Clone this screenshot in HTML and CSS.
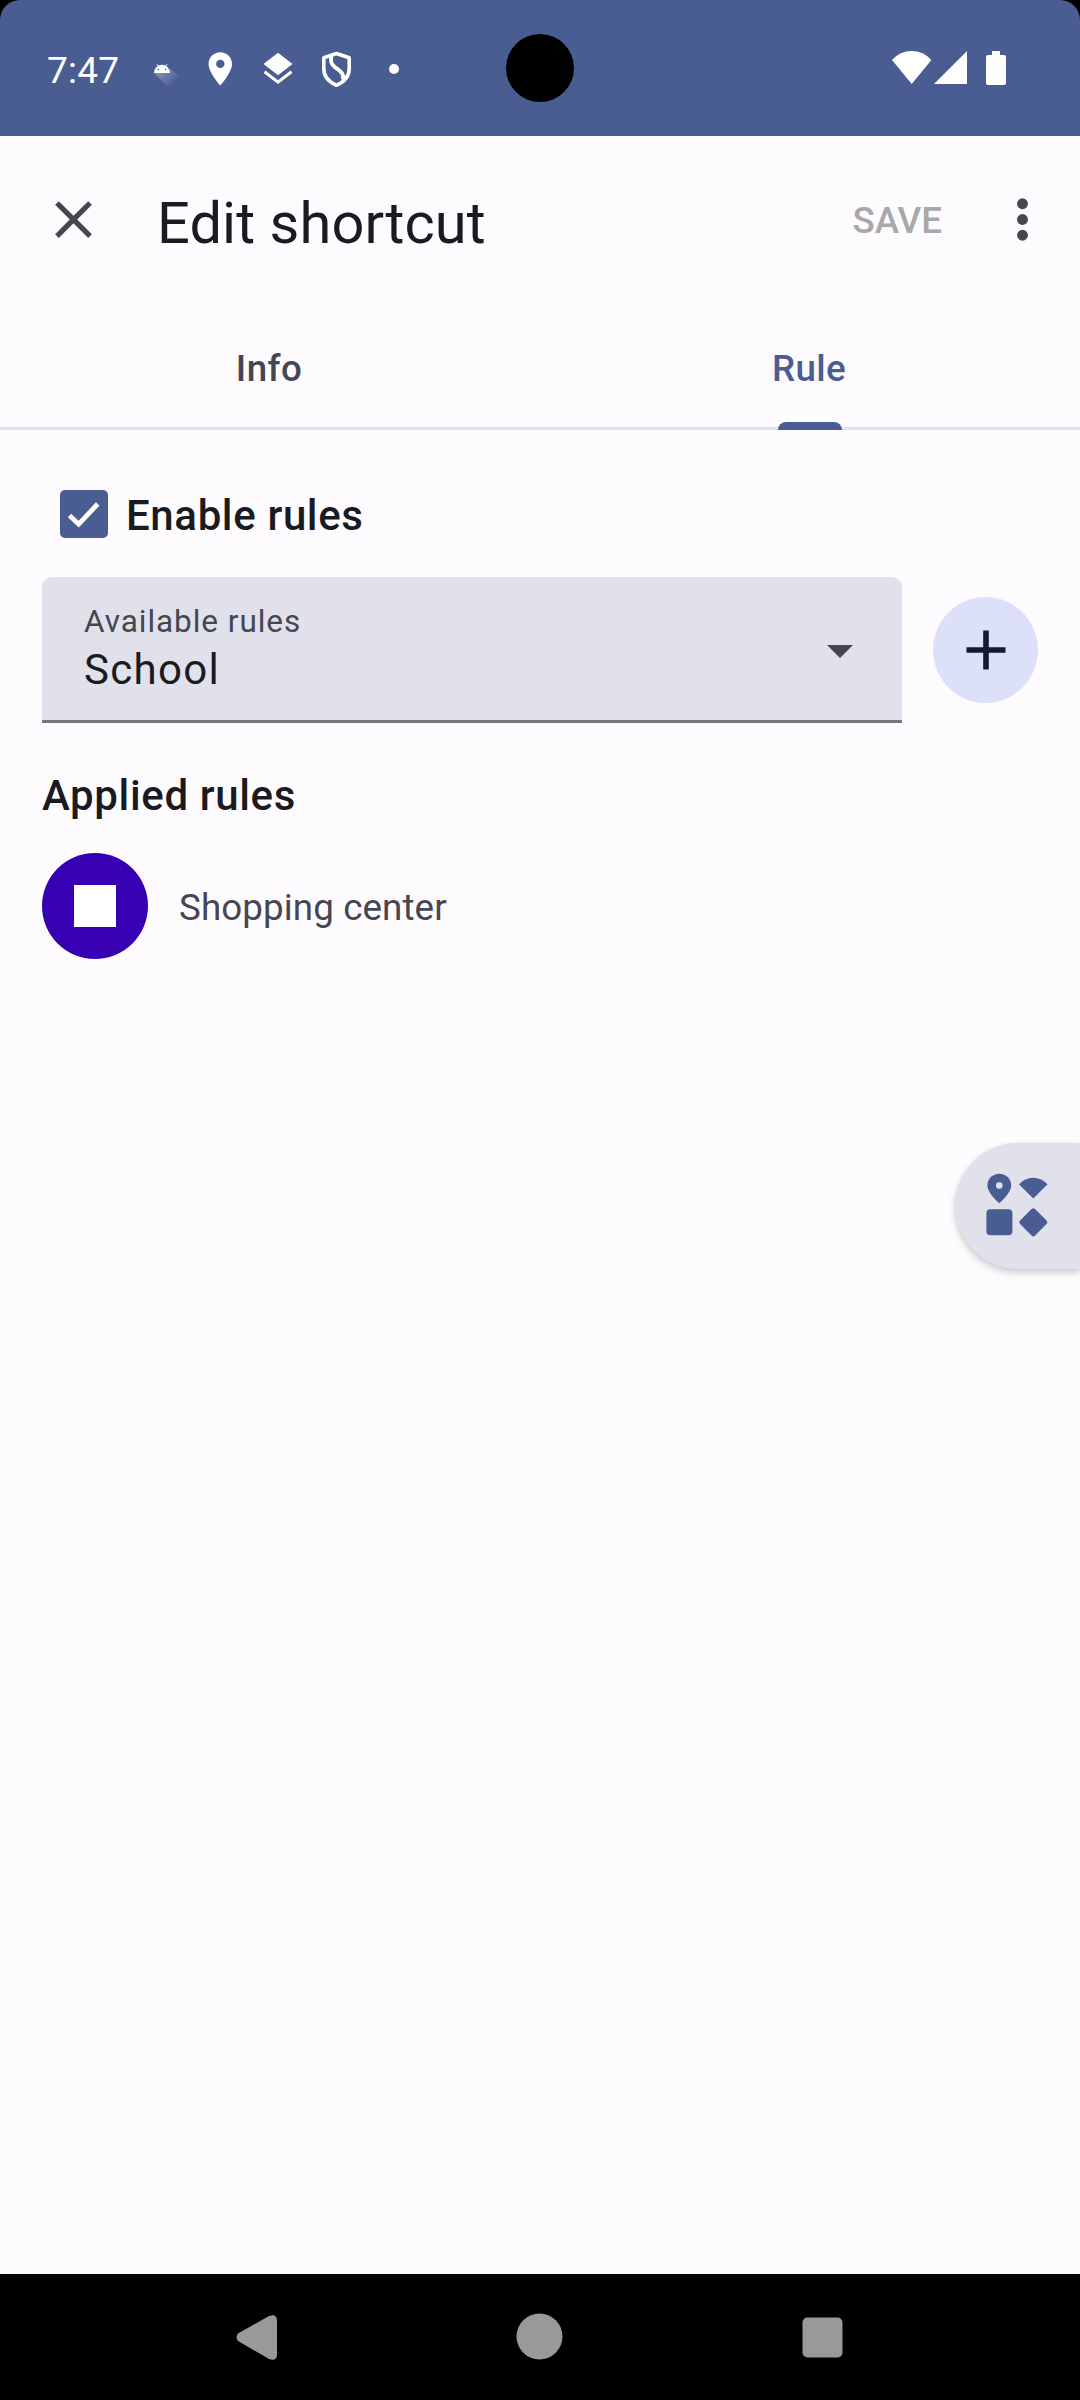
FILE: index.html
```html
<!DOCTYPE html>
<html lang="en">
<head>
<meta charset="utf-8">
<title>Edit shortcut</title>
<link rel="stylesheet" href="styles.css">
</head>
<body>
<div class="screen">
  <header class="status">
    <span class="clock">7:47</span>
    <svg class="notifications" width="260" height="136" viewBox="150 0 260 136" fill="#fff">
      <defs><linearGradient id="fade" x1="160" y1="72" x2="174" y2="86" gradientUnits="userSpaceOnUse"><stop stop-color="#fff" stop-opacity=".28"/><stop offset="1" stop-color="#fff" stop-opacity="0"/></linearGradient></defs>
      <path d="M154 73l14 14 11-11-9-8v5z" fill="url(#fade)"/>
      <path d="M154 73a8 8.200 0 0 1 16 0z"/>
      <path d="M158 66l-1.200-2.200M166 66l1.200-2.200" stroke="#fff" stroke-width=".8"/>
      <circle cx="158.300" cy="69.500" r=".8" fill="#4a5d92"/><circle cx="165.700" cy="69.500" r=".8" fill="#4a5d92"/>
      <path fill-rule="evenodd" d="M220.300 52.300c-6.500 0-11.700 5.100-11.700 11.600 0 8.600 11.700 21.400 11.700 21.400s11.700-12.800 11.700-21.400c0-6.500-5.200-11.600-11.700-11.600zm0 15.800a4.200 4.200 0 1 1 0-8.400 4.200 4.200 0 0 1 0 8.400z"/>
      <path d="M278 52.800l14.500 11.300L278 75.300l-14.500-11.200z"/>
      <path d="M264.500 71.700L278 82.100l13.500-10.400" fill="none" stroke="#fff" stroke-width="3"/>
      <path d="M336.500 53.500l12.700 4.300v11c0 7.500-4.700 13-12.700 16.500-8-3.500-12.700-9-12.700-16.500v-11z" fill="none" stroke="#fff" stroke-width="3.600" stroke-linejoin="round"/>
      <path d="M331.500 56c-1.500 5-.5 8.200 3.500 11.200 5.500 4 9.300 6.500 8 12.500" fill="none" stroke="#fff" stroke-width="3.800"/>
      <circle cx="394" cy="69" r="5"/>
    </svg>
    <span class="camera"></span>
    <svg class="signals" width="120" height="136" viewBox="890 0 120 136" fill="#fff">
      <path d="M911.700 84l-19.700-24q8-9 19.700-9t19.700 9z"/>
      <path d="M934 84l33-33v33z"/>
      <path d="M992 51h8v4h4q2 0 2 2v26q0 2-2 2h-16q-2 0-2-2V57q0-2 2-2h4z"/>
    </svg>
  </header>

  <div class="toolbar">
    <svg class="close" width="63" height="63" viewBox="0 0 24 24"><path fill="#45464f" d="M19 6.410L17.590 5 12 10.590 6.410 5 5 6.410 10.590 12 5 17.590 6.410 19 12 13.410 17.590 19 19 17.590 13.410 12z"/></svg>
    <h1 class="title">Edit shortcut</h1>
    <span class="save">SAVE</span>
    <svg class="more" width="63" height="63" viewBox="0 0 24 24" fill="#45464f"><circle cx="12" cy="6" r="2.080"/><circle cx="12" cy="12" r="2.080"/><circle cx="12" cy="18" r="2.080"/></svg>
  </div>

  <nav class="tabs">
    <div class="tab">Info</div>
    <div class="tab tab-active">Rule<span class="indicator"></span></div>
  </nav>

  <main class="content">
    <label class="enable">
      <svg class="checkbox" width="48" height="48" viewBox="0 0 48 48"><rect width="48" height="48" rx="5" fill="#4a5d92"/><path d="M9.500 25.500l9.200 8.700 19-20.200" fill="none" stroke="#fff" stroke-width="4.800"/></svg>
      <span class="heading">Enable rules</span>
    </label>
    <div class="picker">
      <div class="field">
        <div class="field-text">
          <span class="field-label">Available rules</span>
          <span class="field-value">School</span>
        </div>
        <svg class="arrow" width="26" height="13" viewBox="0 0 26 13"><path d="M0 0h26L13 13z" fill="#45464f"/></svg>
      </div>
      <span class="add"><svg width="40" height="40" viewBox="0 0 40 40"><path d="M20 .5v39M.500 20h39" stroke="#151b2c" stroke-width="5.600"/></svg></span>
    </div>
    <h2 class="heading applied">Applied rules</h2>
    <div class="rule">
      <span class="rule-icon"><span class="rule-square"></span></span>
      <span class="rule-name">Shopping center</span>
    </div>
  </main>

  <div class="drawer">
    <svg width="125" height="126" viewBox="955 1143 125 126" fill="#4a5d92">
      <path fill-rule="evenodd" d="M999.300 1173.800c-6.700 0-11.900 5.100-11.900 11.500 0 8.200 11.900 18 11.900 18s11.900-9.800 11.900-18c0-6.400-5.200-11.500-11.900-11.500zm0 15a3.300 3.300 0 1 1 0-6.600 3.300 3.300 0 0 1 0 6.600z"/>
      <path d="M1033.300 1198.500l-14.300-14.300q6-6.500 14.300-6.500t14.300 6.500z"/>
      <rect x="986.400" y="1209.300" width="26" height="26" rx="4"/>
      <rect x="1022.700" y="1211.700" width="21.200" height="21.200" rx="2.500" transform="rotate(45 1033.300 1222.300)"/>
    </svg>
  </div>

  <footer class="navbar">
    <svg width="1080" height="126" viewBox="0 2274 1080 126" fill="#999">
      <path d="M238 2333.500l31-17.500q8-3 8 5v33q0 8-8 5l-31-18q-3-3.500 0-7.500z"/>
      <circle cx="539.500" cy="2336.500" r="23"/>
      <rect x="802.500" y="2317.500" width="40" height="40" rx="5"/>
    </svg>
  </footer>
</div>
</body>
</html>
```
FILE: styles.css
```css
* { box-sizing: border-box; margin: 0; padding: 0; }
body { background: #000; font-family: Roboto, "Liberation Sans", sans-serif; }
svg { display: block; flex: none; }

.screen {
  position: relative;
  display: flex;
  flex-direction: column;
  width: 1080px;
  height: 2400px;
  overflow: hidden;
  background: #fefbff;
  color: #1a1b21;
}

.status {
  position: relative;
  display: flex;
  align-items: center;
  height: 136px;
  flex: none;
  padding: 0 70px 0 47px;
  background: #4a5d92;
}
.status::before {
  content: "";
  position: absolute;
  inset: 0;
  border-radius: 20px 20px 0 0;
  box-shadow: 0 -20px 0 20px #000;
  clip-path: inset(0 0 100px 0);
}
.clock {
  flex: none;
  width: 103px;
  padding-top: 5px;
  color: #fff;
  font-size: 37px;
  line-height: 44px;
  letter-spacing: .2px;
  white-space: nowrap;
}
.camera {
  position: absolute;
  left: 506px;
  top: 34px;
  width: 68px;
  height: 68px;
  border-radius: 50%;
  background: #000;
}
.signals { margin-left: auto; }

.toolbar {
  display: flex;
  align-items: center;
  height: 167px;
  margin-bottom: 1px;
  flex: none;
  padding: 0 26px 0 42px;
}
.title { margin-left: 52px; padding-top: 6px; font-size: 57.750px; font-weight: 400; line-height: 68px; letter-spacing: .1px; }
.save { flex: none; margin-left: auto; padding-top: 2px; color: #a8a8ab; font-size: 36.750px; font-weight: 500; line-height: 44px; }
.more { margin-left: 49px; }

.tabs {
  display: flex;
  height: 126px;
  flex: none;
  border-bottom: 3px solid #e1e1ec;
}
.tab {
  position: relative;
  flex: 1;
  padding: 43px 2px 0 0;
  text-align: center;
  font-size: 36.750px;
  font-weight: 500;
  line-height: 44px;
  letter-spacing: .4px;
  color: #45464f;
}
.tab-active { color: #4a5d92; }
.indicator {
  position: absolute;
  left: 238px;
  bottom: -3px;
  width: 64px;
  height: 8px;
  border-radius: 8px 8px 0 0;
  background: #4a5d92;
}

.content { flex: 1; padding: 60px 42px 0; }
.enable { display: flex; align-items: center; gap: 18px; padding-left: 18px; height: 48px; }
.enable .heading { padding-top: 3px; }
.heading { font-size: 42px; font-weight: 500; line-height: 50px; letter-spacing: .63px; }
.picker { display: flex; align-items: center; justify-content: space-between; margin-top: 39px; }
.field {
  display: flex;
  align-items: center;
  justify-content: space-between;
  width: 860px;
  height: 146px;
  padding: 3px 49px 0 42px;
  border-bottom: 3px solid #767680;
  border-radius: 10px 10px 0 0;
  background: #e1e1ec;
}
.field-text { display: flex; flex-direction: column; padding-top: 2px; }
.field-label { font-size: 31.500px; line-height: 37px; letter-spacing: .95px; color: #45464f; }
.field-value { font-size: 42px; line-height: 60px; letter-spacing: 1.300px; }
.arrow { margin-top: 3px; }
.add {
  display: flex;
  align-items: center;
  justify-content: center;
  width: 105px;
  height: 106px;
  margin-bottom: 1px;
  border-radius: 50%;
  background: #dce1f9;
}
.applied { margin-top: 48px; }
.rule { display: flex; align-items: center; gap: 32px; margin-top: 32px; }
.rule-icon {
  display: flex;
  align-items: center;
  justify-content: center;
  width: 106px;
  height: 106px;
  border-radius: 50%;
  background: #3700b3;
}
.rule-square { width: 42px; height: 42px; background: #fff; }
.rule-name { margin-left: -1px; padding-top: 3px; font-size: 36.750px; line-height: 44px; letter-spacing: .1px; color: #45464f; }

.drawer {
  position: absolute;
  right: 0;
  top: 1143px;
  border-radius: 63px 0 0 63px;
  background: #e1e1ec;
  box-shadow: 0 4px 7px rgba(0, 0, 0, .18), 0 0 3px rgba(0, 0, 0, .06);
}
.navbar { height: 126px; flex: none; background: #000; }
```
